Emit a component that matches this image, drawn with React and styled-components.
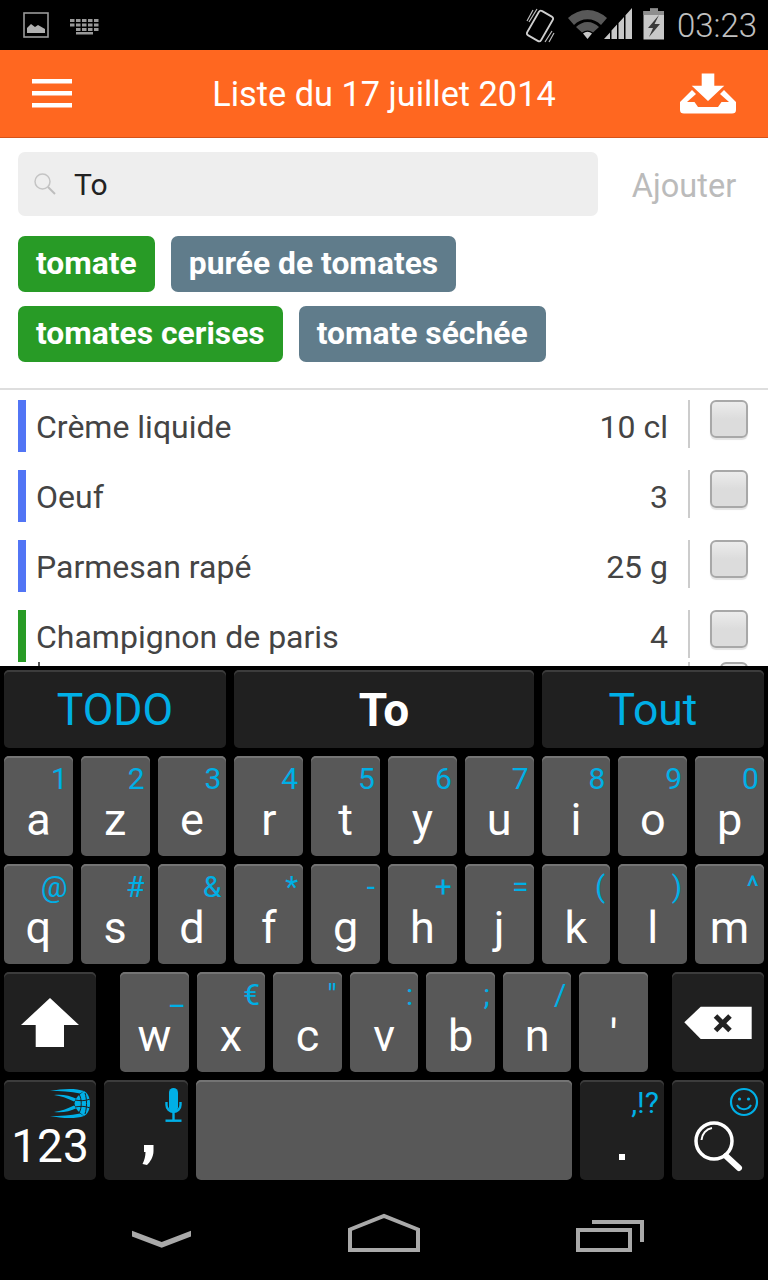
import React from "react";
import styled, { createGlobalStyle } from "styled-components";

const BLUE = "#00afe6";
const FONT = 'Roboto, "Liberation Sans", sans-serif';

const GlobalStyle = createGlobalStyle`
  html, body { margin: 0; padding: 0; background: #000; }
  body { font-family: ${FONT}; }
  * { box-sizing: border-box; }
`;

const Screen = styled.div`
  width: 768px;
  height: 1280px;
  display: flex;
  flex-direction: column;
  background: #fff;
  overflow: hidden;
`;

/* status bar */
const StatusBar = styled.div`
  height: 50px;
  flex: none;
  background: #000;
  display: flex;
  justify-content: space-between;
  align-items: center;
`;
const StatusIcons = styled.svg`
  display: block;
  width: ${(p) => p.$w}px;
  height: 50px;
`;
const StatusRight = styled.div`
  display: flex;
  align-items: center;
`;
const Clock = styled.span`
  font-size: 33px;
  font-weight: 300;
  color: #c0c0c0;
  width: 91px;
  white-space: nowrap;
`;

/* action bar */
const Header = styled.header`
  height: 88px;
  flex: none;
  background: #ff6720;
  border-bottom: 1px solid #d5531a;
  display: grid;
  grid-template-columns: 1fr auto 1fr;
  align-items: center;
  padding: 0 32px;
`;
const HeaderTitle = styled.h1`
  margin: 0;
  font-size: 34.3px;
  font-weight: 400;
  color: #fff;
  white-space: nowrap;
`;
const HeaderIcon = styled.svg`
  display: block;
  justify-self: ${(p) => p.$side};
`;

/* app body */
const Main = styled.main`
  flex: 1;
  min-height: 0;
  overflow: hidden;
`;
const SearchRow = styled.div`
  display: flex;
  align-items: center;
  padding: 14px 0 0 18px;
`;
const SearchField = styled.div`
  width: 580px;
  height: 64px;
  border-radius: 7px;
  background: #eeeeee;
  display: flex;
  align-items: center;
  padding-left: 15px;
`;
const SearchText = styled.span`
  margin-left: 17px;
  font-size: 30px;
  color: #222;
`;
const AddButton = styled.span`
  flex: 1;
  text-align: center;
  font-size: 32.5px;
  color: #bbbbbb;
  padding: 3px 0 0 2px;
`;
const Tags = styled.div`
  display: flex;
  flex-direction: column;
  gap: 14px;
  padding: 20px 18px 26px;
  border-bottom: 2px solid #dedede;
`;
const TagRow = styled.div`
  display: flex;
  gap: 16px;
`;
const Tag = styled.span`
  height: 56px;
  line-height: 54px;
  padding: 0 18px;
  border-radius: 7px;
  font-size: 31.8px;
  font-weight: 700;
  color: #fff;
  background: ${(p) => (p.$known ? "#289b26" : "#607c8b")};
`;
const List = styled.div`
  padding-top: 10px;
`;
const Row = styled.div`
  height: 52px;
  margin-bottom: 18px;
  padding: 0 20px 0 18px;
  display: flex;
  align-items: flex-start;
`;
const LastRow = styled(Row)`
  height: 8px;
  margin-bottom: 0;
  margin-top: -18px;
`;
const ColorBar = styled.div`
  width: 8px;
  height: 52px;
  background: ${(p) => p.$color};
`;
const Name = styled.span`
  flex: 1;
  margin-left: 10px;
  font-size: 32px;
  line-height: 54px;
  color: #444;
`;
const Amount = styled.span`
  font-size: 32px;
  line-height: 54px;
  color: #444;
`;
const Sep = styled.div`
  width: 2px;
  height: 48px;
  margin-left: 20px;
  background: #cccccc;
`;
const Check = styled.div`
  width: 38px;
  height: 38px;
  margin-left: 20px;
  border: 2px solid #a8a8a8;
  border-radius: 6px;
  background: linear-gradient(#ececec, #dcdcdc 50%);
  box-shadow: 0 2px 1px #e4e4e4;
`;
const CutCheck = styled(Check)`
  width: 28px;
  margin-left: 30px;
`;
const CutText = styled.div`
  width: 2px;
  height: 8px;
  margin-left: 20px;
  background: #555;
`;
const CutSpacer = styled.div`
  flex: 1;
`;

/* keyboard */
const Keyboard = styled.div`
  flex: none;
  height: 514px;
  background: #000;
  padding: 4px 4px 0;
  display: flex;
  flex-direction: column;
  gap: 8px;
`;
const KeyRow = styled.div`
  height: ${(p) => p.$h || 100}px;
  flex: none;
  display: flex;
  gap: ${(p) => p.$gap ?? 8}px;
`;
const KeyGroup = styled.div`
  display: flex;
  gap: 8px;
  flex: 1;
  margin: 0 24px;
`;
const Key = styled.div`
  position: relative;
  flex: ${(p) => (p.$w ? "none" : "1 1 0")};
  width: ${(p) => (p.$w ? `${p.$w}px` : "auto")};
  border-radius: 5px;
  background: ${(p) => (p.$dark ? "#202020" : "#585858")};
  box-shadow: inset 0 2px 0 ${(p) => (p.$dark ? "#3c3c3c" : "#747474")};
  color: #fff;
  text-align: center;
`;
const Suggestion = styled(Key)`
  font-size: ${(p) => (p.$bold ? 46 : 44.5)}px;
  font-weight: ${(p) => (p.$bold ? 700 : 400)};
  line-height: 81px;
  color: ${(p) => (p.$bold ? "#fff" : BLUE)};
`;
const Letter = styled.div`
  padding-top: 41px;
  font-size: 45px;
  line-height: 45px;
  font-weight: 400;
`;
const Numeric = styled(Letter)`
  padding-top: 43px;
  font-size: 46px;
  line-height: 46px;
`;
const Hint = styled.span`
  position: absolute;
  top: 8px;
  right: 5px;
  font-size: 30px;
  line-height: 30px;
  color: ${BLUE};
`;
const KeyIcon = styled.svg`
  position: absolute;
  inset: 0;
  width: 100%;
  height: 100%;
`;

/* nav bar */
const NavBar = styled.nav`
  flex: none;
  height: 100px;
  margin-top: 0;
  background: #000;
  display: flex;
  justify-content: space-between;
  padding: 30px 124px 0 132px;
`;
const NavIcon = styled.svg`
  display: block;
`;

const rowOne = [["a", "1"], ["z", "2"], ["e", "3"], ["r", "4"], ["t", "5"], ["y", "6"], ["u", "7"], ["i", "8"], ["o", "9"], ["p", "0"]];
const rowTwo = [["q", "@"], ["s", "#"], ["d", "&"], ["f", "*"], ["g", "-"], ["h", "+"], ["j", "="], ["k", "("], ["l", ")"], ["m", "^"]];
const rowThree = [["w", "_"], ["x", "€"], ["c", '"'], ["v", ":"], ["b", ";"], ["n", "/"], ["'", ""]];

const items = [
  { name: "Crème liquide", qty: "10 cl", color: "#5275f5" },
  { name: "Oeuf", qty: "3", color: "#5275f5" },
  { name: "Parmesan rapé", qty: "25 g", color: "#5275f5" },
  { name: "Champignon de paris", qty: "4", color: "#289b26" },
];

function LetterKey({ label, hint }) {
  return (
    <Key>
      <Letter>{label}</Letter>
      {hint && <Hint>{hint}</Hint>}
    </Key>
  );
}

function LeftStatus() {
  const keys = [];
  [19, 23.5, 28].forEach((y, r) => {
    for (let i = 0; i < (r === 2 ? 4 : 5); i++) {
      keys.push(<rect key={`${r}-${i}`} x={(r === 2 ? 76 : 70) + i * 6} y={y} width="4.5" height="3" fill="#999" />);
    }
  });
  return (
    <StatusIcons $w={110} viewBox="0 0 110 50">
      <rect x="24" y="13" width="24" height="24" fill="none" stroke="#9a9a9a" strokeWidth="1.6" />
      <path d="M27 33 V28 L31 24 L35 27 L38 25 L45 29 V33 Z" fill="#b0b0b0" />
      {keys}
      <rect x="76" y="32" width="17" height="2.5" fill="#999" />
    </StatusIcons>
  );
}

function RightStatus() {
  return (
    <StatusIcons $w={151} viewBox="526 0 151 50">
      {/* rotation */}
      <rect x="532" y="12" width="16" height="28" rx="2.5" fill="none" stroke="#cfcfcf" strokeWidth="1.8" transform="rotate(30 540 26)" />
      <path d="M533 10 L527 21 M537 9 L529 22 M545 42 L552 31 M549 42 L554 33" stroke="#bdbdbd" strokeWidth="1.2" />
      {/* wifi */}
      <path d="M568 18 A28 28 0 0 1 607 18 L601 25 A19 19 0 0 0 574 25 Z" fill="#585858" />
      <path d="M576 27 A16 16 0 0 1 599 27 L593 32.5 A9 9 0 0 0 582 32.5 Z" fill="#585858" />
      <path d="M583 33.5 A7 7 0 0 1 592 33.5 L587.5 39 Z" fill="#c8c8c8" />
      {/* signal */}
      <path d="M604 39 L610 32.4 V39 Z M611.5 30.6 L617 24.6 V39 H611.5 Z M618.5 23 L624 17 V39 H618.5 Z M625.5 15.2 L632 8 V39 H625.5 Z" fill="#c8c8c8" />
      {/* battery */}
      <path d="M650 8.5 H658 V11 H664 V39.5 H643.5 V11 H650 Z" fill="#c8c8c8" />
      <path d="M650 8.5 H658 V11 H664 V15 H643.5 V11 H650 Z" fill="#8e8e8e" />
      <path d="M659 15 L648 28 H653 L649 37 L660 24 H654.5 Z" fill="#3a3a3a" />
    </StatusIcons>
  );
}

export default function App() {
  return (
    <Screen>
      <GlobalStyle />
      <StatusBar>
        <LeftStatus />
        <StatusRight>
          <RightStatus />
          <Clock>03:23</Clock>
        </StatusRight>
      </StatusBar>

      <Header>
        <HeaderIcon $side="start" width="40" height="29" viewBox="0 0 40 29">
          <rect y="0" width="40" height="4.5" fill="#fff" />
          <rect y="12" width="40" height="4.5" fill="#fff" />
          <rect y="24" width="40" height="4.5" fill="#fff" />
        </HeaderIcon>
        <HeaderTitle>Liste du 17 juillet 2014</HeaderTitle>
        <HeaderIcon $side="end" width="56" height="41" viewBox="680 73 56 41">
          <path d="M701.7 73.5 H714.3 V85.7 H724.3 L708 101 L691.7 85.7 H701.7 Z" fill="#fff" />
          <path d="M692 90 L680 102 V110 Q680 113.5 684 113.5 H732 Q736 113.5 736 110 V102 L724 90 L720 94 L729 102 H721.5 L718 107 H698 L694.5 102 H687 L696 94 Z" fill="#fff" />
        </HeaderIcon>
      </Header>

      <Main>
        <SearchRow>
          <SearchField>
            <svg width="24" height="24" viewBox="0 0 24 24" fill="none">
              <circle cx="9.5" cy="9.5" r="7.5" stroke="#c4c4c4" strokeWidth="1.5" />
              <path d="M15 15 L22 22" stroke="#bdbdbd" strokeWidth="2" />
            </svg>
            <SearchText>To</SearchText>
          </SearchField>
          <AddButton>Ajouter</AddButton>
        </SearchRow>
        <Tags>
          <TagRow>
            <Tag $known>tomate</Tag>
            <Tag>purée de tomates</Tag>
          </TagRow>
          <TagRow>
            <Tag $known>tomates cerises</Tag>
            <Tag>tomate séchée</Tag>
          </TagRow>
        </Tags>
        <List>
          {items.map((item) => (
            <Row key={item.name}>
              <ColorBar $color={item.color} />
              <Name>{item.name}</Name>
              <Amount>{item.qty}</Amount>
              <Sep />
              <Check />
            </Row>
          ))}
          <LastRow>
            <CutText />
            <CutSpacer />
            <Sep />
            <CutCheck />
          </LastRow>
        </List>
      </Main>

      <Keyboard>
        <KeyRow $h={78}>
          <Suggestion $w={222} $dark>TODO</Suggestion>
          <Suggestion $dark $bold>To</Suggestion>
          <Suggestion $w={222} $dark>Tout</Suggestion>
        </KeyRow>
        <KeyRow>
          {rowOne.map(([l, h]) => <LetterKey key={l} label={l} hint={h} />)}
        </KeyRow>
        <KeyRow>
          {rowTwo.map(([l, h]) => <LetterKey key={l} label={l} hint={h} />)}
        </KeyRow>
        <KeyRow $gap={0}>
          <Key $w={92} $dark>
            <KeyIcon viewBox="0 0 92 100">
              <path d="M46 26 L17 53 H31.7 V75 H60 V53 H75 Z" fill="#fff" />
            </KeyIcon>
          </Key>
          <KeyGroup>
            {rowThree.map(([l, h]) => <LetterKey key={l} label={l} hint={h} />)}
          </KeyGroup>
          <Key $w={92} $dark>
            <KeyIcon viewBox="0 0 92 100">
              <path d="M12.3 50.3 L28.7 34.7 H79.7 V67 H28.7 Z" fill="#fff" />
              <path d="M43.5 44 L58 58.5 M58 44 L43.5 58.5" stroke="#222" strokeWidth="5" />
            </KeyIcon>
          </Key>
        </KeyRow>
        <KeyRow>
          <Key $w={92} $dark>
            <Numeric>123</Numeric>
            <KeyIcon viewBox="0 0 92 100">
              <g fill={BLUE}>
                <path d="M46 11 C58 8.5 72 8 80 11 L76 13.5 C67 11.5 56 11 46 11 Z" />
                <path d="M50 15 C58 14 66 15.5 73 19 L70 21.5 C63 18 57 16 50 15 Z" />
                <path d="M46 36 C58 38.5 72 39 80 36 L76 33.5 C67 35.5 56 36 46 36 Z" />
                <path d="M50 32 C58 33 66 31.5 73 28 L70 25.5 C63 29 57 31 50 32 Z" />
                <path d="M80 11 C88 15 88 32 80 36 L74 31 C72 29 71 26 70.5 23.5 C71 21 72 18 74 16 Z" />
              </g>
              <path d="M75 14 C78 19 78 28 75 33 M81 13 C83 19 83 28 81 34 M71 20 C76 21 82 21 86 19 M71 27 C76 26 82 26 86 28" fill="none" stroke="#202020" strokeWidth="1" />
            </KeyIcon>
          </Key>
          <Key $w={84} $dark>
            <KeyIcon viewBox="0 0 84 100">
              <rect x="65" y="8" width="9" height="24" rx="4.5" fill={BLUE} />
              <path d="M62.5 22 V25 A7 7 0 0 0 76.5 25 V22 M69.5 32 V40" fill="none" stroke={BLUE} strokeWidth="2.4" />
              <rect x="61.5" y="39.5" width="16" height="2.4" fill={BLUE} />
              <path d="M40 65 H49.5 V71 C49.5 77 46 82 43 85 L38.5 84 C40.5 80 41.5 76 41.5 72 H40 Z" fill="#fff" />
            </KeyIcon>
          </Key>
          <Key />
          <Key $w={84} $dark>
            <Hint>,!?</Hint>
            <KeyIcon viewBox="0 0 84 100">
              <rect x="39" y="74" width="6" height="6" fill="#fff" />
            </KeyIcon>
          </Key>
          <Key $w={92} $dark>
            <KeyIcon viewBox="0 0 92 100">
              <circle cx="72" cy="22" r="13" fill="none" stroke={BLUE} strokeWidth="2.2" />
              <circle cx="67.5" cy="19" r="1.6" fill={BLUE} />
              <circle cx="76.5" cy="19" r="1.6" fill={BLUE} />
              <path d="M65 25 A8 8 0 0 0 79 25" fill="none" stroke={BLUE} strokeWidth="2" />
              <circle cx="42" cy="61" r="18" fill="none" stroke="#fff" strokeWidth="3.5" />
              <path d="M29.5 60 A13 13 0 0 1 40 48" fill="none" stroke="#fff" strokeWidth="2" />
              <path d="M54 76 L67 88" stroke="#fff" strokeWidth="6" strokeLinecap="round" />
            </KeyIcon>
          </Key>
        </KeyRow>
      </Keyboard>

      <NavBar>
        <NavIcon width="60" height="46" viewBox="132 1210 60 46">
          <path d="M132 1230.7 L161.7 1242 L191 1230.7 V1236.5 L161.7 1247.7 L132 1236.5 Z" fill="#a9a9a9" />
        </NavIcon>
        <NavIcon width="72" height="46" viewBox="348 1210 72 46">
          <path d="M350 1229.5 L384 1216 L418 1229.5 V1250 H350 Z" fill="none" stroke="#a9a9a9" strokeWidth="4" />
        </NavIcon>
        <NavIcon width="68" height="46" viewBox="576 1210 68 46">
          <rect x="578" y="1230" width="52" height="20" fill="none" stroke="#a9a9a9" strokeWidth="4" />
          <path d="M592 1222 H642 V1242" fill="none" stroke="#a9a9a9" strokeWidth="4" />
        </NavIcon>
      </NavBar>
    </Screen>
  );
}
